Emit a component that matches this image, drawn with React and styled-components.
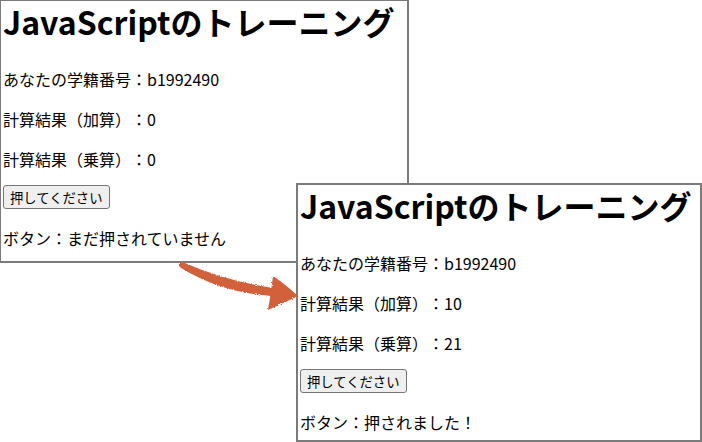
import React from 'react';
import styled, { createGlobalStyle } from 'styled-components';

const GlobalStyle = createGlobalStyle`
  html, body {
    margin: 0;
    padding: 0;
    background: #ffffff;
  }
  body {
    font-family: "Noto Sans CJK JP", "Noto Sans", sans-serif;
    color: #000000;
    text-spacing-trim: space-all;
  }
`;

const Canvas = styled.div`
  position: relative;
  width: 702px;
  height: 442px;
  overflow: hidden;
  background: #ffffff;
`;

/* 스크린샷 창 - 겹쳐 놓인 두 장 */
const Shot = styled.div`
  position: absolute;
  left: ${(p) => p.$left}px;
  top: ${(p) => p.$top}px;
  width: ${(p) => p.$width}px;
  height: ${(p) => p.$height}px;
  box-sizing: border-box;
  border-style: solid;
  border-color: #7b7b7b;
  border-width: ${(p) => p.$borders};
  background: #ffffff;
  padding-left: ${(p) => p.$pad}px;
  display: flex;
  flex-direction: column;
`;

const Heading = styled.h1`
  margin: -3px 0 23px;
  font-size: 32px;
  font-weight: 700;
  line-height: 46px;
  white-space: nowrap;
`;

const Line = styled.p`
  margin: 0 0 16px;
  font-size: 16px;
  line-height: 24px;
  white-space: nowrap;
`;

const ButtonRow = styled.div`
  margin: -2px 0 17px;
  display: flex;
`;

const PushButton = styled.button`
  font-family: "Noto Sans CJK JP", "Noto Sans", sans-serif;
  font-size: 13.33px;
  line-height: 17px;
  height: 24px;
  padding: 1px 6px;
  margin: 0;
  color: #000000;
  background: #efefef;
  border: 1px solid #767676;
  border-radius: 3px;
`;

const ArrowLayer = styled.svg`
  position: absolute;
  left: 0;
  top: 0;
  width: 702px;
  height: 442px;
  pointer-events: none;
`;

const TrainingPage = ({ sum, product, status, ...rest }) => (
  <Shot {...rest}>
    <Heading>JavaScriptのトレーニング</Heading>
    <Line>あなたの学籍番号：b1992490</Line>
    <Line>計算結果（加算）：{sum}</Line>
    <Line>計算結果（乗算）：{product}</Line>
    <ButtonRow>
      <PushButton type="button">押してください</PushButton>
    </ButtonRow>
    <Line>ボタン：{status}</Line>
  </Shot>
);

const Arrow = () => (
  <ArrowLayer viewBox="0 0 702 442">
    <defs>
      <filter id="chalk" x="-10%" y="-10%" width="120%" height="120%">
        <feTurbulence type="fractalNoise" baseFrequency="0.9" numOctaves="2" seed="3" result="noise" />
        <feDisplacementMap in="SourceGraphic" in2="noise" scale="3" />
      </filter>
    </defs>
    <g fill="#d2613b" filter="url(#chalk)">
      <path d="M180 261 Q225 281 273 288 L272 296 Q222 293 181 268 Q177 265 180 261 Z" />
      <path d="M273 276 Q285 284 298 296 Q284 303 268 310 Q271 293 273 276 Z" />
    </g>
  </ArrowLayer>
);

export default function App() {
  return (
    <>
      <GlobalStyle />
      <Canvas>
        <TrainingPage
          $left={0}
          $top={0}
          $width={409}
          $height={263}
          $borders="1px 2px 2px 1px"
          $pad={2}
          sum={0}
          product={0}
          status="まだ押されていません"
        />
        <TrainingPage
          $left={296}
          $top={183}
          $width={406}
          $height={259}
          $borders="2px"
          $pad={2}
          sum={10}
          product={21}
          status="押されました！"
        />
        <Arrow />
      </Canvas>
    </>
  );
}
